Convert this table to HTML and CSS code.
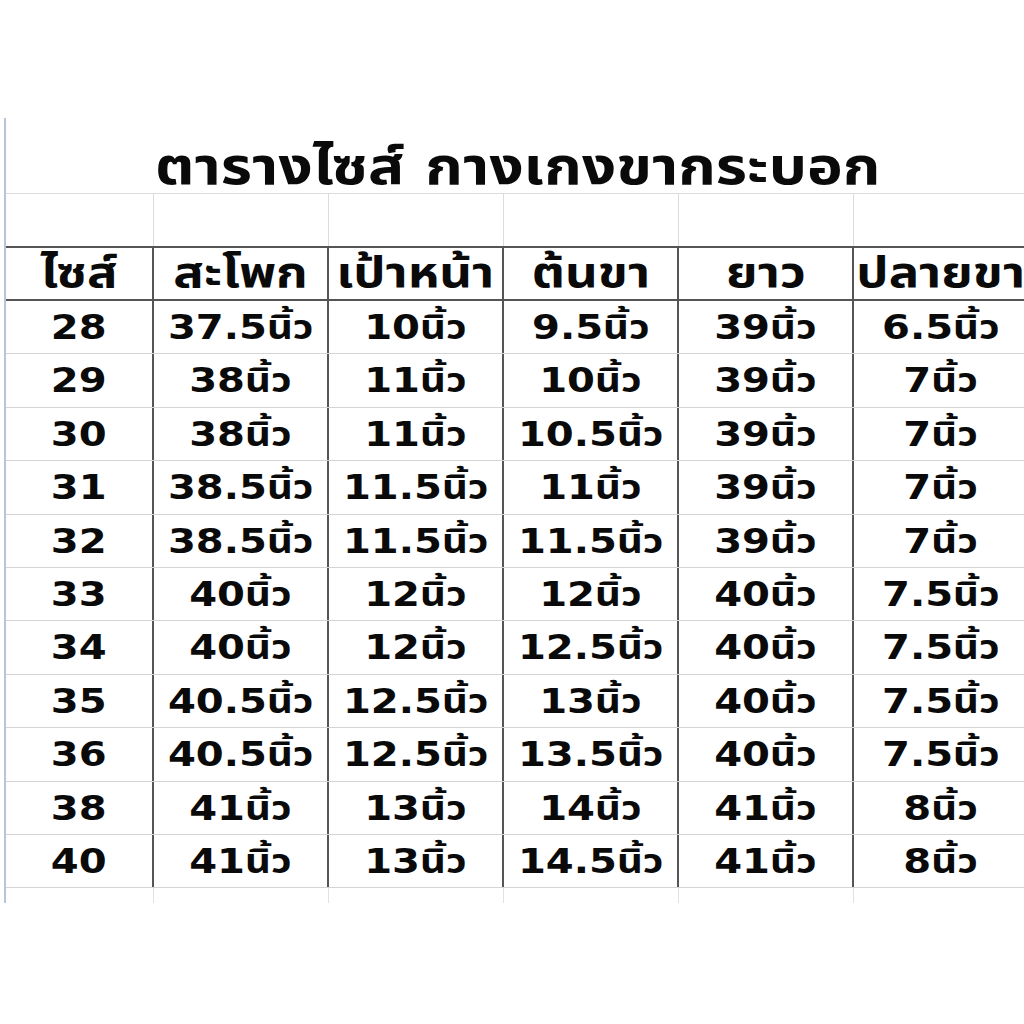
FILE: index.html
```html
<!DOCTYPE html>
<html lang="th">
<head>
<meta charset="utf-8">
<title>ตารางไซส์ กางเกงขากระบอก</title>
<link rel="stylesheet" href="styles.css">
</head>
<body>
<div class="sheet">
  <div class="title"><span>ตารางไซส์ กางเกงขากระบอก</span></div>
  <div class="row blank"><div></div><div></div><div></div><div></div><div></div><div></div></div>
  <div class="row head"><div><span>ไซส์</span></div><div><span>สะโพก</span></div><div><span>เป้าหน้า</span></div><div><span>ต้นขา</span></div><div><span>ยาว</span></div><div><span>ปลายขา</span></div></div>
  <div class="row data"><div><span>28</span></div><div><span>37.5นิ้ว</span></div><div><span>10นิ้ว</span></div><div><span>9.5นิ้ว</span></div><div><span>39นิ้ว</span></div><div><span>6.5นิ้ว</span></div></div>
  <div class="row data"><div><span>29</span></div><div><span>38นิ้ว</span></div><div><span>11นิ้ว</span></div><div><span>10นิ้ว</span></div><div><span>39นิ้ว</span></div><div><span>7นิ้ว</span></div></div>
  <div class="row data"><div><span>30</span></div><div><span>38นิ้ว</span></div><div><span>11นิ้ว</span></div><div><span>10.5นิ้ว</span></div><div><span>39นิ้ว</span></div><div><span>7นิ้ว</span></div></div>
  <div class="row data"><div><span>31</span></div><div><span>38.5นิ้ว</span></div><div><span>11.5นิ้ว</span></div><div><span>11นิ้ว</span></div><div><span>39นิ้ว</span></div><div><span>7นิ้ว</span></div></div>
  <div class="row data"><div><span>32</span></div><div><span>38.5นิ้ว</span></div><div><span>11.5นิ้ว</span></div><div><span>11.5นิ้ว</span></div><div><span>39นิ้ว</span></div><div><span>7นิ้ว</span></div></div>
  <div class="row data"><div><span>33</span></div><div><span>40นิ้ว</span></div><div><span>12นิ้ว</span></div><div><span>12นิ้ว</span></div><div><span>40นิ้ว</span></div><div><span>7.5นิ้ว</span></div></div>
  <div class="row data"><div><span>34</span></div><div><span>40นิ้ว</span></div><div><span>12นิ้ว</span></div><div><span>12.5นิ้ว</span></div><div><span>40นิ้ว</span></div><div><span>7.5นิ้ว</span></div></div>
  <div class="row data"><div><span>35</span></div><div><span>40.5นิ้ว</span></div><div><span>12.5นิ้ว</span></div><div><span>13นิ้ว</span></div><div><span>40นิ้ว</span></div><div><span>7.5นิ้ว</span></div></div>
  <div class="row data"><div><span>36</span></div><div><span>40.5นิ้ว</span></div><div><span>12.5นิ้ว</span></div><div><span>13.5นิ้ว</span></div><div><span>40นิ้ว</span></div><div><span>7.5นิ้ว</span></div></div>
  <div class="row data"><div><span>38</span></div><div><span>41นิ้ว</span></div><div><span>13นิ้ว</span></div><div><span>14นิ้ว</span></div><div><span>41นิ้ว</span></div><div><span>8นิ้ว</span></div></div>
  <div class="row data"><div><span>40</span></div><div><span>41นิ้ว</span></div><div><span>13นิ้ว</span></div><div><span>14.5นิ้ว</span></div><div><span>41นิ้ว</span></div><div><span>8นิ้ว</span></div></div>
  <div class="row tail"><div></div><div></div><div></div><div></div><div></div><div></div></div>
</div>
</body>
</html>
```
FILE: styles.css
```css
html, body {
  margin: 0;
  padding: 0;
  background: #ffffff;
  overflow: hidden;
}
body {
  width: 1024px;
  height: 1024px;
  font-family: "Tahoma", "DejaVu Sans", "Noto Sans Thai", "Noto Sans", sans-serif;
  font-weight: bold;
  color: #0a0a0a;
}
.sheet {
  margin-top: 118px;
  margin-left: 4px;
  width: 1030px;
  border-left: 2px solid #b8c5d8;
  padding-top: 23px;
  box-sizing: border-box;
}
.title {
  height: 53px;
  line-height: 50px;
  font-size: 52px;
  text-align: center;
  border-bottom: 1px solid #dcdcdc;
  box-sizing: border-box;
  width: 1023px;
  white-space: nowrap;
}
.title span {
  display: inline-block;
  transform: scaleX(1.16);
}
.row {
  display: grid;
  grid-template-columns: 148px repeat(5, 175px);
  box-sizing: border-box;
}
.row > div {
  text-align: center;
  white-space: nowrap;
  overflow: hidden;
  box-sizing: border-box;
}
.row span {
  display: inline-block;
}
.blank {
  height: 52px;
}
.blank > div {
  border-right: 1px solid #dcdcdc;
}
.head {
  height: 55px;
  border-top: 2px solid #555555;
  border-bottom: 2px solid #555555;
}
.head > div {
  font-size: 42px;
  line-height: 50px;
  border-right: 2px solid #555555;
}
.head span {
  transform: scaleX(1.21);
}
.data {
  height: 53.4px;
  border-bottom: 1px solid #d4d4d4;
}
.data > div {
  font-size: 34px;
  line-height: 52px;
  border-right: 2px solid #555555;
}
.data span {
  transform: scaleX(1.18);
}
.tail {
  height: 15px;
}
.tail > div {
  border-right: 1px solid #e2e2e2;
}
```
